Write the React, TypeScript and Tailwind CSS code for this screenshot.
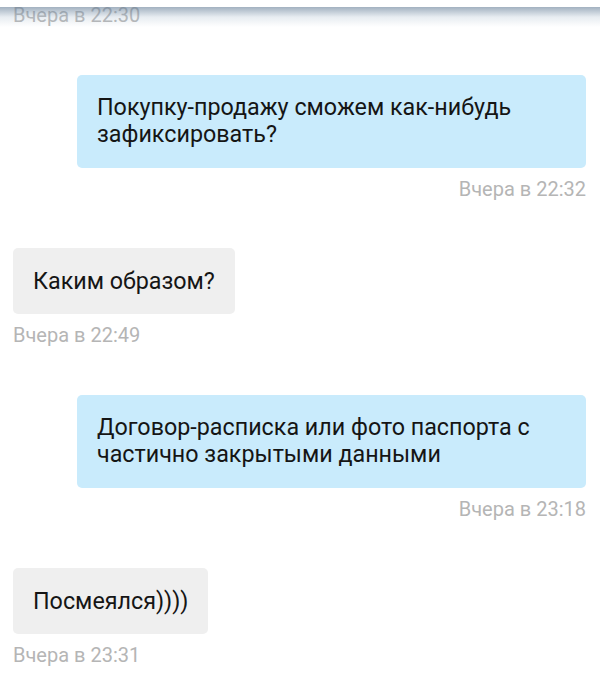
import React from "react";

type Msg = { out: boolean; text: string; time: string };

const msgs: Msg[] = [
  { out: true, text: "Покупку-продажу сможем как-нибудь зафиксировать?", time: "Вчера в 22:32" },
  { out: false, text: "Каким образом?", time: "Вчера в 22:49" },
  { out: true, text: "Договор-расписка или фото паспорта с частично закрытыми данными", time: "Вчера в 23:18" },
  { out: false, text: "Посмеялся))))", time: "Вчера в 23:31" },
];

export default function App() {
  return (
    <div
      className="relative w-[600px] h-[678px] overflow-hidden bg-white"
      style={{ fontFamily: "Roboto, 'Noto Sans', sans-serif" }}
    >
      <div className="flex flex-col pl-[13px] pr-[14px] pt-[3px]">
        <div className="text-[20px] leading-[24px] text-[#b5b5b5]">Вчера в 22:30</div>
        {msgs.map((m, i) => (
          <div key={i} className={`mt-[47.5px] flex flex-col ${m.out ? "items-end" : "items-start"}`}>
            <div
              className={`max-w-[509px] rounded-[5px] px-5 py-[19.5px] text-[23.3px] leading-[27px] text-[#151515] ${
                m.out ? "bg-[#c9ebfc]" : "bg-[#efefef]"
              }`}
            >
              {m.text}
            </div>
            <div className="mt-[9px] text-[20px] leading-[24px] text-[#b5b5b5]">{m.time}</div>
          </div>
        ))}
      </div>
      <div className="absolute left-0 right-0 top-0 h-[7px] bg-white" />
      <div className="absolute left-0 right-0 top-[7px] h-[20px] bg-gradient-to-b from-[rgba(100,125,150,0.6)] via-[rgba(170,188,205,0.28)] to-transparent" />
    </div>
  );
}
